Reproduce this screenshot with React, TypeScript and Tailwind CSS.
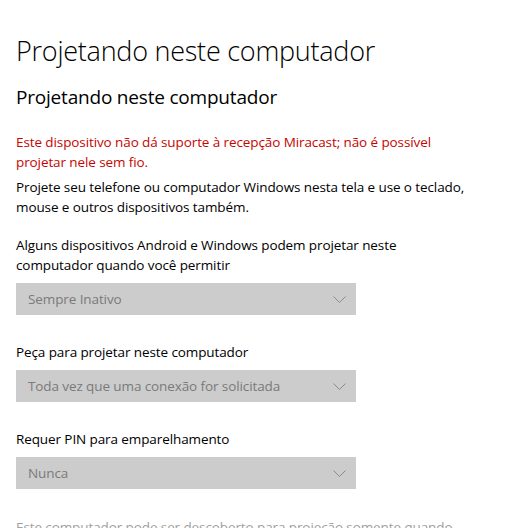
const font = "font-['Segoe_UI','Open_Sans','Noto_Sans',sans-serif]";

const Chevron = () => (
  <svg width="13" height="7" viewBox="0 0 13 7" fill="none">
    <path d="M0.5 0.5 L6.5 6.5 L12.5 0.5" stroke="#8a8a8a" strokeWidth="1" />
  </svg>
);

const Select = ({ value }: { value: string }) => (
  <div className="flex h-8 w-[340px] items-center justify-between bg-[#cccccc] pl-[12px] pr-[10px]">
    <span className="text-[13.5px] leading-5 tracking-[-0.1px] text-[#7a7a7a]">{value}</span>
    <Chevron />
  </div>
);

const settings = [
  {
    label: "Alguns dispositivos Android e Windows podem projetar neste computador quando você permitir",
    value: "Sempre Inativo",
  },
  { label: "Peça para projetar neste computador", value: "Toda vez que uma conexão for solicitada" },
  { label: "Requer PIN para emparelhamento", value: "Nunca" },
];

export default function App() {
  return (
    <div className={`h-[528px] w-[511px] overflow-hidden bg-white pl-4 text-black ${font}`}>
      <h1 className="mt-[31px] text-[27px] font-light leading-10 tracking-[-0.25px]">
        Projetando neste computador
      </h1>
      <h2 className="mt-[12px] text-[19px] leading-7 tracking-[-0.2px]">Projetando neste computador</h2>
      <div className="text-[13.5px] leading-5 tracking-[-0.1px]">
        <p className="mt-[21px] w-[440px] text-[#c50500]">
          Este dispositivo não dá suporte à recepção Miracast; não é possível projetar nele sem fio.
        </p>
        <p className="mt-[5px] w-[470px]">
          Projete seu telefone ou computador Windows nesta tela e use o teclado, mouse e outros dispositivos também.
        </p>
        {settings.map((s, i) => (
          <div key={i} className={i === 0 ? "mt-[18px]" : "mt-[27px]"}>
            <p className="w-[400px]">{s.label}</p>
            <div className="mt-[8px]">
              <Select value={s.value} />
            </div>
          </div>
        ))}
        <p className="mt-[28px] w-[470px] text-[#a0a0a0]">
          Este computador pode ser descoberto para projeção somente quando estiver conectado a uma fonte de energia
        </p>
      </div>
    </div>
  );
}
